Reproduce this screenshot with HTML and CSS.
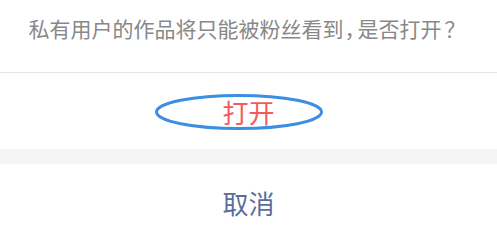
FILE: index.html
```html
<!DOCTYPE html>
<html lang="zh-CN">
<head>
<meta charset="utf-8">
<title>提示</title>
<link rel="stylesheet" href="styles.css">
</head>
<body>
<div class="sheet">
  <div class="title">私有用户的作品将只能被粉丝看到<span class="comma">，</span>是否打开<span class="qmark">？</span></div>
  <div class="action open">
    <span class="label">打开</span>
    <svg class="mark" width="172" height="38" viewBox="0 0 172 38">
      <ellipse cx="84" cy="19" rx="82.5" ry="16.5" fill="none" stroke="#3b8fe2" stroke-width="3"/>
    </svg>
  </div>
  <div class="gap"></div>
  <div class="action cancel">
    <span class="label">取消</span>
  </div>
</div>
</body>
</html>
```
FILE: styles.css
```css
html, body {
  margin: 0;
  padding: 0;
  background: #ffffff;
}
.sheet {
  width: 497px;
  font-family: "Noto Sans CJK SC", "Noto Sans", sans-serif;
}
.title {
  height: 73px;
  box-sizing: border-box;
  padding-bottom: 17px;
  padding-right: 3px;
  border-bottom: 1px solid #e5e5e5;
  display: flex;
  align-items: center;
  justify-content: center;
  font-size: 21px;
  color: #888888;
  white-space: nowrap;
}
.comma {
  margin-left: 1px;
  letter-spacing: -8px;
}
.qmark {
  display: inline-block;
  width: 21px;
  margin-left: 3px;
  text-align: left;
}
.action {
  position: relative;
  height: 76px;
  display: flex;
  align-items: center;
  justify-content: center;
  font-size: 26px;
}
.open .label {
  color: #f25a5e;
}
.cancel .label {
  color: #5a6e9c;
}
.mark {
  position: absolute;
  left: 155px;
  top: 20px;
}
.gap {
  height: 15px;
  background: #f5f5f5;
}
```
